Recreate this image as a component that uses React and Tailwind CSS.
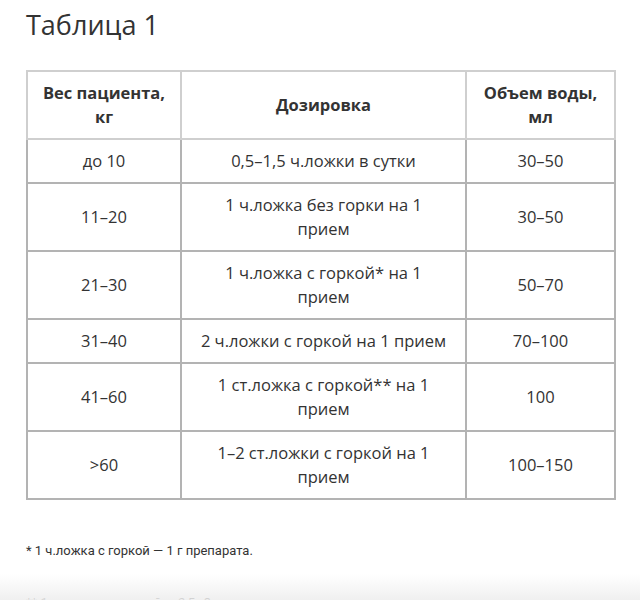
const rows = [
    { weight: "до 10", dose: ["0,5–1,5 ч.ложки в сутки"], water: "30–50" },
    { weight: "11–20", dose: ["1 ч.ложка без горки на 1", "прием"], water: "30–50" },
    { weight: "21–30", dose: ["1 ч.ложка с горкой* на 1", "прием"], water: "50–70" },
    { weight: "31–40", dose: ["2 ч.ложки с горкой на 1 прием"], water: "70–100" },
    { weight: "41–60", dose: ["1 ст.ложка с горкой** на 1", "прием"], water: "100" },
    { weight: ">60", dose: ["1–2 ст.ложки с горкой на 1", "прием"], water: "100–150" },
];

function App() {
    return (
        <div
            className="relative h-[600px] overflow-hidden bg-white px-[26px] text-[#333]"
            style={{ fontFamily: '"Open Sans", "Noto Sans", sans-serif' }}
        >
            {/* Title */}
            <h2 className="pt-[6px] text-[27px] leading-[38px]">Таблица 1</h2>

            {/* Table */}
            <table className="mt-[26px] w-[588px] table-fixed border-collapse text-center text-[16.5px] leading-6">
                <colgroup>
                    <col className="w-[154px]" />
                    <col className="w-[285px]" />
                    <col className="w-[149px]" />
                </colgroup>
                <thead>
                    <tr>
                        <th className="border-2 border-[#cfcfcf] px-2 py-[9px] font-bold">
                            Вес пациента,<br />кг
                        </th>
                        <th className="border-2 border-[#cfcfcf] px-2 py-[9px] font-bold">
                            Дозировка
                        </th>
                        <th className="border-2 border-[#cfcfcf] px-2 py-[9px] font-bold">
                            Объем воды,<br />мл
                        </th>
                    </tr>
                </thead>
                <tbody>
                    {rows.map((r, i) => (
                        <tr key={i}>
                            <td className="border-2 border-[#b3b3b3] px-2 py-[9px]">{r.weight}</td>
                            <td className="border-2 border-[#b3b3b3] px-1 py-[9px]">
                                {r.dose.map((line, j) => (
                                    <span key={j} className="block whitespace-nowrap">{line}</span>
                                ))}
                            </td>
                            <td className="border-2 border-[#b3b3b3] px-2 py-[9px]">{r.water}</td>
                        </tr>
                    ))}
                </tbody>
            </table>

            {/* Notes */}
            <p
                className="mt-[41px] text-[13px] leading-5"
                style={{ fontFamily: 'Roboto, "Noto Sans", sans-serif' }}
            >
                * 1 ч.ложка с горкой — 1 г препарата.
            </p>
            <p
                className="mt-[32px] text-[13px] leading-5"
                style={{ fontFamily: 'Roboto, "Noto Sans", sans-serif' }}
            >
                ** 1 ст.ложка с горкой — 2,5–3 г препарата.
            </p>

            {/* Fade */}
            <div className="absolute bottom-0 left-0 h-[26px] w-full bg-gradient-to-b from-white/0 to-[#eeeeee]/90" />
        </div>
    );
}

export default App;
